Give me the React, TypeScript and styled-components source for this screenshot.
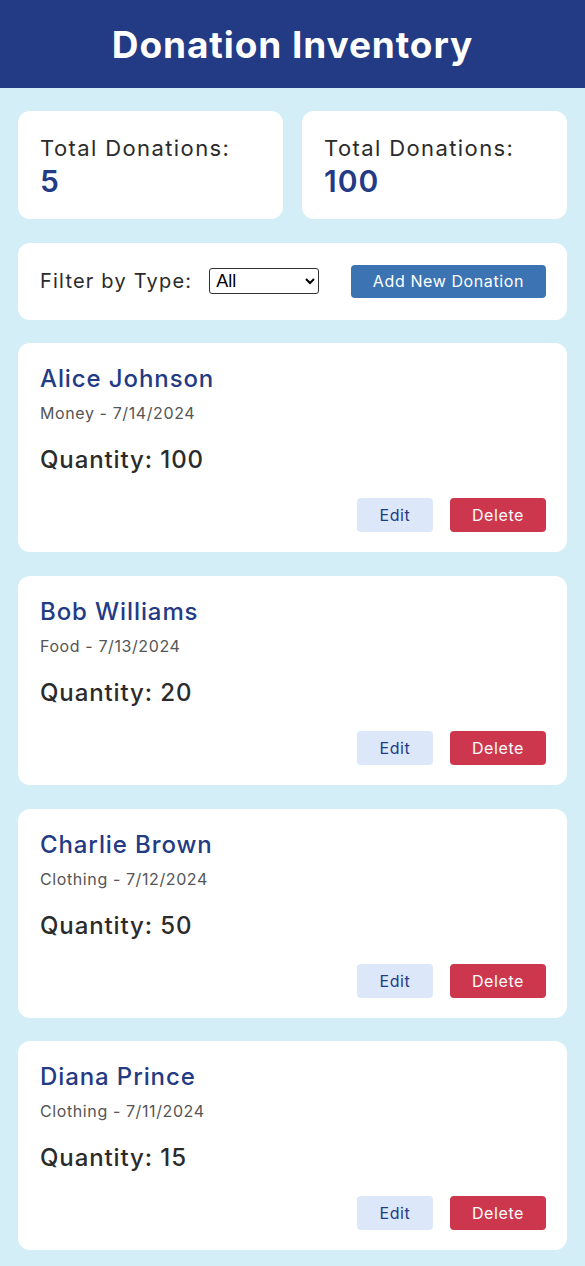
import React from "react";
import styled, { createGlobalStyle } from "styled-components";

const Global = createGlobalStyle`
  html, body { margin: 0; padding: 0; }
  body {
    background: #d3eef7;
    font-family: Inter, "Noto Sans", Roboto, sans-serif;
    color: #2b2b2b;
  }
  * { box-sizing: border-box; }
`;

const Header = styled.header`
  height: 88px;
  background: #233a85;
  display: flex;
  align-items: center;
  justify-content: center;
`;

const Title = styled.h1`
  margin: 0;
  color: #fff;
  font-size: 37px;
  font-weight: 700;
  letter-spacing: 0.9px;
`;

const Main = styled.main`
  padding: 23px 18px 16px;
  display: flex;
  flex-direction: column;
  gap: 23.7px;
`;

const Card = styled.section`
  background: #fff;
  border-radius: 12px;
`;

const Stats = styled.div`
  display: grid;
  grid-template-columns: 1fr 1fr;
  gap: 19px;
`;

const StatCard = styled(Card)`
  height: 108px;
  padding: 22px 22px;
  display: flex;
  flex-direction: column;
`;

const StatLabel = styled.div`
  font-size: 22px;
  line-height: 30px;
  letter-spacing: 1.4px;
  color: #2b2b2b;
`;

const StatValue = styled.div`
  margin-top: 2px;
  font-size: 30px;
  line-height: 32px;
  font-weight: 600;
  letter-spacing: 1px;
  color: #233a85;
`;

const FilterCard = styled(Card)`
  height: 77px;
  padding: 0 21px 0 22px;
  display: flex;
  align-items: center;
  justify-content: space-between;
`;

const FilterGroup = styled.div`
  display: flex;
  align-items: center;
  gap: 17px;
`;

const FilterLabel = styled.label`
  font-size: 20px;
  letter-spacing: 1.2px;
  color: #2b2b2b;
`;

const Select = styled.select`
  width: 110px;
  height: 26px;
  font-size: 18px;
  font-family: Arial, "Liberation Sans", sans-serif;
  border: 1px solid #333;
  border-radius: 3px;
  background: #fff;
  color: #000;
  padding: 0 2px;
`;

const Button = styled.button<{ $variant: "primary" | "edit" | "danger" }>`
  border: none;
  border-radius: 4px;
  height: ${(p) => (p.$variant === "primary" ? "33px" : "34px")};
  padding: 0 ${(p) => (p.$variant === "edit" ? "22.5px" : "22px")};
  font-family: inherit;
  font-size: 16px;
  letter-spacing: 0.6px;
  cursor: pointer;
  background: ${(p) =>
    p.$variant === "primary" ? "#3b73b3" : p.$variant === "edit" ? "#dce8f9" : "#cc374d"};
  color: ${(p) => (p.$variant === "edit" ? "#233a85" : "#fff")};
`;

const DonationCard = styled(Card)`
  height: 209px;
  padding: 21px 21px 20px 22px;
  display: flex;
  flex-direction: column;
`;

const Name = styled.h2`
  margin: 0;
  font-size: 24px;
  line-height: 30px;
  font-weight: 500;
  letter-spacing: 0.9px;
  color: #233a85;
`;

const Meta = styled.div`
  margin-top: 9px;
  font-size: 16px;
  line-height: 20px;
  letter-spacing: 0.6px;
  color: #555;
`;

const Quantity = styled.div`
  margin-top: 22px;
  font-size: 24px;
  line-height: 30px;
  font-weight: 500;
  letter-spacing: 0.9px;
  color: #2b2b2b;
`;

const Actions = styled.div`
  margin-top: auto;
  display: flex;
  justify-content: flex-end;
  gap: 17px;
`;

const donations = [
  { name: "Alice Johnson", type: "Money", date: "7/14/2024", qty: 100 },
  { name: "Bob Williams", type: "Food", date: "7/13/2024", qty: 20 },
  { name: "Charlie Brown", type: "Clothing", date: "7/12/2024", qty: 50 },
  { name: "Diana Prince", type: "Clothing", date: "7/11/2024", qty: 15 },
];

export default function App() {
  return (
    <>
      <Global />
      <Header>
        <Title>Donation Inventory</Title>
      </Header>
      <Main>
        <Stats>
          <StatCard>
            <StatLabel>Total Donations:</StatLabel>
            <StatValue>5</StatValue>
          </StatCard>
          <StatCard>
            <StatLabel>Total Donations:</StatLabel>
            <StatValue>100</StatValue>
          </StatCard>
        </Stats>
        <FilterCard>
          <FilterGroup>
            <FilterLabel htmlFor="type">Filter by Type:</FilterLabel>
            <Select id="type" defaultValue="All">
              <option>All</option>
              <option>Money</option>
              <option>Food</option>
              <option>Clothing</option>
            </Select>
          </FilterGroup>
          <Button $variant="primary">Add New Donation</Button>
        </FilterCard>
        {donations.map((d) => (
          <DonationCard key={d.name}>
            <Name>{d.name}</Name>
            <Meta>
              {d.type} - {d.date}
            </Meta>
            <Quantity>Quantity: {d.qty}</Quantity>
            <Actions>
              <Button $variant="edit">Edit</Button>
              <Button $variant="danger">Delete</Button>
            </Actions>
          </DonationCard>
        ))}
      </Main>
    </>
  );
}
